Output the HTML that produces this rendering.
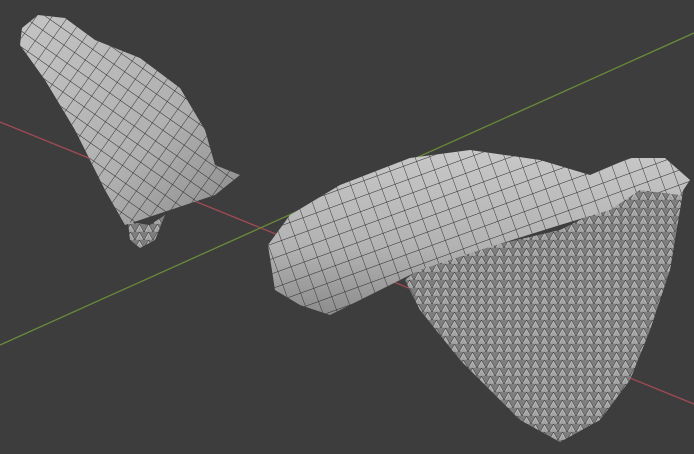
<!DOCTYPE html>
<html><head><style>html,body{margin:0;padding:0;background:#3d3d3d;width:694px;height:454px;overflow:hidden}</style></head>
<body>
<svg width="694" height="454" viewBox="0 0 694 454" xmlns="http://www.w3.org/2000/svg">
<defs>
<linearGradient id="g1" x1="0" y1="0" x2="1" y2="1">
<stop offset="0" stop-color="#c4c4c4"/><stop offset="0.6" stop-color="#b0b0b0"/><stop offset="1" stop-color="#8a8a8a"/></linearGradient>
<linearGradient id="g2" x1="0" y1="0" x2="0" y2="1">
<stop offset="0" stop-color="#c8c8c8"/><stop offset="0.6" stop-color="#b2b2b2"/><stop offset="1" stop-color="#8c8c8c"/></linearGradient>
<pattern id="grid" width="14" height="14" patternUnits="userSpaceOnUse" patternTransform="rotate(-20)">
<path d="M0 0H14M0 0V14" stroke="#2a2a2a" stroke-width="0.9" fill="none"/></pattern>
<pattern id="grid2" width="13" height="13" patternUnits="userSpaceOnUse" patternTransform="rotate(35)">
<path d="M0 0H13M0 0V13" stroke="#2a2a2a" stroke-width="0.9" fill="none"/></pattern>
<pattern id="tri" width="9" height="8" patternUnits="userSpaceOnUse">
<rect width="9" height="8" fill="#7e7e7e"/>
<path d="M0 8L4.5 0L9 8Z" fill="#b4b4b4" stroke="#2e2e2e" stroke-width="0.5"/>
<path d="M2 8L4.5 3L7 8Z" fill="#a0a0a0"/></pattern>
</defs>
<line x1="0" y1="122" x2="694" y2="404" stroke="#a04a55" stroke-width="1.3"/>
<line x1="0" y1="345" x2="694" y2="33" stroke="#6a8a3a" stroke-width="1.3"/>
<g>
<path d="M22 28L38 15L65 18L95 40L140 58L180 88L205 130L215 165L240 175L215 195L170 210L125 225L105 190L75 130L45 80L20 45Z" fill="url(#g1)"/>
<path d="M22 28L38 15L65 18L95 40L140 58L180 88L205 130L215 165L240 175L215 195L170 210L125 225L105 190L75 130L45 80L20 45Z" fill="url(#grid2)"/>
<path d="M128 222L150 225L165 215L155 240L140 248L130 240Z" fill="url(#tri)"/>
</g>
<path d="M405 280L430 260L560 230L640 190L685 180L670 270L650 330L630 380L600 420L560 442L520 420L460 360L420 310Z" fill="url(#tri)"/>
<path d="M268 245L290 215L340 185L410 158L470 150L540 160L590 175L630 158L665 158L690 180L680 195L640 190L610 210L560 225L480 250L420 270L380 290L330 315L300 305L275 290Z" fill="url(#g2)"/>
<path d="M268 245L290 215L340 185L410 158L470 150L540 160L590 175L630 158L665 158L690 180L680 195L640 190L610 210L560 225L480 250L420 270L380 290L330 315L300 305L275 290Z" fill="url(#grid)"/>
</svg>
</body></html>
